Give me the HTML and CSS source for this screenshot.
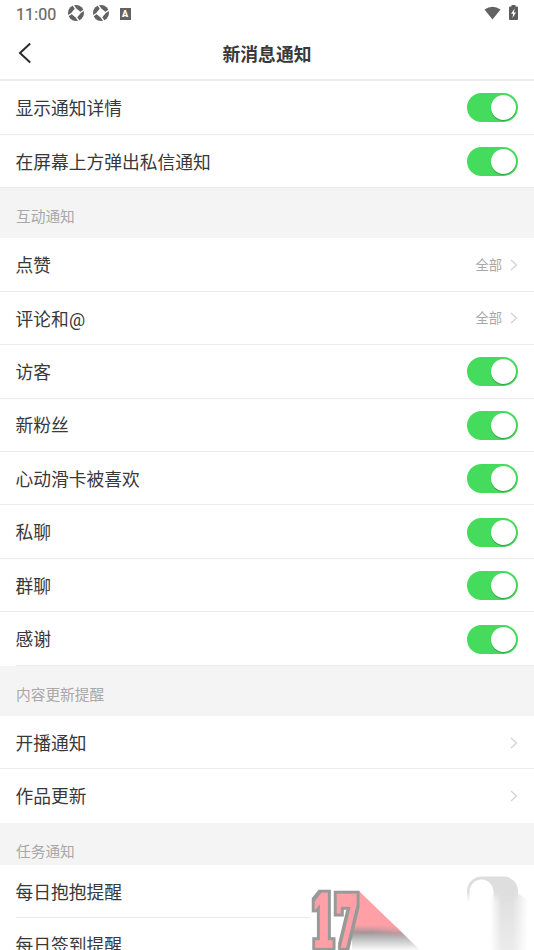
FILE: index.html
```html
<!DOCTYPE html>
<html lang="zh-CN">
<head>
<meta charset="utf-8">
<title>新消息通知</title>
<link rel="stylesheet" href="styles.css">
</head>
<body>
<svg class="defs" width="0" height="0">
  <defs>
    <symbol id="shutter" viewBox="0 0 16 16">
      <circle cx="8" cy="8" r="8" fill="#626262"/>
      <path d="M7.500 2.800 13.200 7.500 8.500 13.200 2.800 8.500z" fill="#fff"/>
      <path d="M7.500 3.500 5 0M12.500 7.500 16 5M8.500 12.500 11 16M3.500 8.500 0 11" stroke="#fff" stroke-width="1.300"/>
    </symbol>
    <symbol id="chevron" viewBox="0 0 8 12">
      <path d="M1 1l5.500 5L1 11" fill="none" stroke="#d0d0d0" stroke-width="1.100"/>
    </symbol>
  </defs>
</svg>
<main class="screen">
  <div class="status">
    <span class="time">11:00</span>
    <svg class="app-icon"><use href="#shutter"/></svg>
    <svg class="app-icon second"><use href="#shutter"/></svg>
    <span class="a-badge">A</span>
    <svg class="wifi" viewBox="0 0 18 14"><path d="M.5 3.200Q9-2.400 17.500 3.200L9 13.800z" fill="#626262"/></svg>
    <svg class="battery" viewBox="0 0 9 15"><path d="M2.500 1.500V0h4v1.500H8q1 0 1 1V14q0 1-1 1H1q-1 0-1-1V2.500q0-1 1-1z" fill="#5c5c5c"/><path d="M5.700 3.500 2 8.700h2.200L3.400 13 7 7.600H4.900z" fill="#fff"/></svg>
  </div>
  <header class="header">
    <svg class="back" viewBox="0 0 14 22"><path d="M12.200 1.500 2 11l10.200 9.500" fill="none" stroke="#2b2b2b" stroke-width="2"/></svg>
    <h1>新消息通知</h1>
  </header>

  <div class="row"><span>显示通知详情</span><i class="switch"></i></div>
  <div class="row"><span>在屏幕上方弹出私信通知</span><i class="switch"></i></div>

  <h2 class="section">互动通知</h2>
  <div class="row"><span>点赞</span><em>全部</em><svg class="chev"><use href="#chevron"/></svg></div>
  <div class="row"><span>评论和<b>@</b></span><em>全部</em><svg class="chev"><use href="#chevron"/></svg></div>
  <div class="row"><span>访客</span><i class="switch"></i></div>
  <div class="row"><span>新粉丝</span><i class="switch"></i></div>
  <div class="row"><span>心动滑卡被喜欢</span><i class="switch"></i></div>
  <div class="row"><span>私聊</span><i class="switch"></i></div>
  <div class="row"><span>群聊</span><i class="switch"></i></div>
  <div class="row inset"><span>感谢</span><i class="switch"></i></div>

  <h2 class="section">内容更新提醒</h2>
  <div class="row"><span>开播通知</span><svg class="chev"><use href="#chevron"/></svg></div>
  <div class="row plain"><span>作品更新</span><svg class="chev"><use href="#chevron"/></svg></div>

  <h2 class="section short">任务通知</h2>
  <div class="row inset task"><span>每日抱抱提醒</span></div>
  <div class="row plain"><span>每日签到提醒</span></div>

  <svg class="overlay" viewBox="300 865 234 85">
    <defs>
      <clipPath id="wedge"><path d="M350 891h9L420 950H350z"/></clipPath>
      <linearGradient id="melt" gradientUnits="userSpaceOnUse" x1="0" y1="925" x2="0" y2="950">
        <stop offset="0" stop-color="#ffa0a7"/><stop offset=".3" stop-color="#a89598"/>
        <stop offset=".5" stop-color="#b8b8b8"/><stop offset="1" stop-color="#fbfbfb"/>
      </linearGradient>
      <linearGradient id="warm" gradientUnits="userSpaceOnUse" x1="372" y1="0" x2="410" y2="0">
        <stop offset="0" stop-color="#ffa0a7" stop-opacity="0"/><stop offset="1" stop-color="#ffa0a7" stop-opacity=".8"/>
      </linearGradient>
      <linearGradient id="tail" x1="0" y1="0" x2="1" y2="0">
        <stop offset="0" stop-color="#dedede" stop-opacity="0"/><stop offset=".3" stop-color="#dedede"/>
        <stop offset=".6" stop-color="#dedede"/><stop offset="1" stop-color="#dedede" stop-opacity="0"/>
      </linearGradient>
      <linearGradient id="down" x1="0" y1="0" x2="0" y2="1">
        <stop offset="0" stop-color="#fff"/><stop offset="1" stop-color="#999"/>
      </linearGradient>
      <linearGradient id="down-fast" x1="0" y1="0" x2="0" y2="1">
        <stop offset=".6" stop-color="#fff"/><stop offset="1" stop-color="#000"/>
      </linearGradient>
      <mask id="tail-mask"><path d="M480 889h54v61h-54z" fill="url(#down)"/></mask>
      <mask id="track-mask"><path d="M460 876h64v26h-64z" fill="url(#down-fast)"/></mask>
      <filter id="soft" x="-20%" y="-50%" width="140%" height="200%"><feGaussianBlur stdDeviation="2"/></filter>
      <filter id="outline" x="-20%" y="-20%" width="140%" height="140%">
        <feMorphology in="SourceAlpha" operator="dilate" radius="3" result="wide"/>
        <feFlood flood-color="#999"/>
        <feComposite in2="wide" operator="in"/>
        <feMerge><feMergeNode/><feMergeNode in="SourceGraphic"/></feMerge>
      </filter>
    </defs>
    <g clip-path="url(#wedge)">
      <path d="M352 891h70v59h-70z" fill="url(#melt)"/>
      <path d="M374 920h40v13h-40z" fill="url(#warm)" filter="url(#soft)"/>
    </g>
    <path d="M336 903h20l-8 35h-10z" fill="#fff"/>
    <text class="seventeen" x="311.500" y="946" textLength="47" lengthAdjust="spacingAndGlyphs" filter="url(#outline)">17</text>
    <path d="M490 896q2-4 8-4h14q6 0 16 8v50h-38z" fill="url(#tail)" mask="url(#tail-mask)"/>
    <g mask="url(#track-mask)">
      <path d="M467 905V891a14.500 14.500 0 0 1 14.500-14.500h22A14.500 14.500 0 0 1 518 891v14z" fill="#dedede"/>
      <path d="M469.500 892a12 12.500 0 0 1 24 0v13h-24z" fill="#fff"/>
    </g>
  </svg>
</main>
</body>
</html>
```
FILE: styles.css
```css
* { box-sizing: border-box; }
body {
  margin: 0;
  background: #fff;
  color: #383838;
  font-family: "Noto Sans CJK SC", sans-serif;
  overflow: hidden;
}
.defs { position: absolute; }
.screen {
  position: relative;
  width: 534px;
  height: 950px;
  overflow: hidden;
}
.status {
  display: flex;
  align-items: center;
  height: 27px;
  padding: 0 16px;
  color: #666;
}
.time {
  width: 52px;
  font: 400 16px/27px Roboto, sans-serif;
  -webkit-text-stroke: .2px #666;
  letter-spacing: .1px;
  padding-top: 1px;
}
.app-icon { width: 16px; height: 16px; margin-top: -1px; }
.second { margin-left: 8.500px; }
.a-badge {
  width: 11px;
  height: 12px;
  margin-left: 11px;
  background: #626262;
  color: #fff;
  font: 900 9px/12px Roboto, sans-serif;
  text-align: center;
}
.wifi { width: 17px; height: 14px; margin-left: auto; margin-top: -1px; }
.battery { width: 9px; height: 15px; margin-left: 8px; margin-top: -2px; }
.header {
  display: grid;
  grid-template-columns: 70px 1fr 70px;
  align-items: center;
  height: 54.200px;
  border-bottom: 2px solid #ebebeb;
}
.back { width: 14px; height: 22px; margin-left: 18px; }
h1 {
  margin: 0;
  text-align: center;
  font-size: 17.800px;
  line-height: 26px;
  font-weight: 700;
}
.row {
  position: relative;
  display: flex;
  align-items: center;
  height: 53.450px;
  padding: 0 16px;
  font-size: 17.750px;
  line-height: 26px;
}
.row::after {
  content: "";
  position: absolute;
  left: 0;
  right: 0;
  bottom: 0;
  height: 1px;
  background: #ebebeb;
}
.row.inset::after { left: 16px; }
.row.task::after { right: 224px; }
.row.plain::after { display: none; }
.row span { margin-left: -.4px; margin-right: auto; padding-bottom: 1.600px; }
.row b { font: 400 18px/20px Roboto, sans-serif; }
.row em {
  font-style: normal;
  font-size: 13.300px;
  color: #a8a8a8;
  margin-right: 8px;
}
.chev { width: 8px; height: 12px; }
.section {
  display: flex;
  align-items: center;
  height: 50.200px;
  margin: 0;
  padding: 6px 16px 0;
  background: #f4f4f4;
  color: #a8a8a8;
  font-size: 14.700px;
  line-height: 22px;
  font-weight: 400;
}
.section.short { height: 42px; padding-top: 15px; }
.switch {
  width: 51px;
  height: 29px;
  border-radius: 15px;
  background: #45dc5d;
  display: flex;
  justify-content: flex-end;
  padding: 2px;
}
.switch::before {
  content: "";
  width: 25px;
  height: 25px;
  border-radius: 50%;
  background: #fff;
  box-shadow: 0 1px 1px rgba(0, 70, 20, .4);
}
.overlay {
  position: absolute;
  left: 300px;
  top: 865px;
  width: 234px;
  height: 85px;
}
.seventeen {
  font: 700 70px "DejaVu Serif", serif;
  fill: #ffa0a7;
  stroke: #ffa0a7;
  stroke-width: 3.500px;
}
```
